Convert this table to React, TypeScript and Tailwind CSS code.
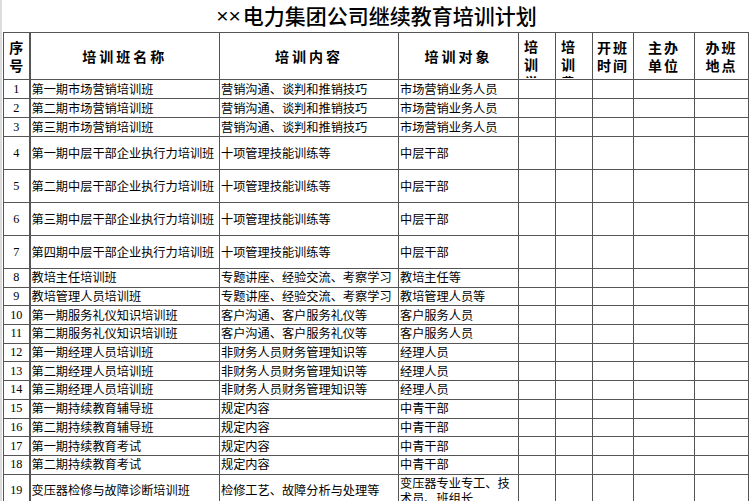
import React from "react";

interface Course {
  no: number;
  name: string;
  content: string;
  target: string;
  h: string;
}

const cjk = { fontFamily: '"Noto Sans CJK SC", "Noto Sans", sans-serif' };
const num = { fontFamily: '"Liberation Serif", "Noto Sans CJK SC", serif' };
const latin = { fontFamily: '"Liberation Sans", "Noto Sans CJK SC", sans-serif' };

const courses: Course[] = [
  { no: 1, name: "第一期市场营销培训班", content: "营销沟通、谈判和推销技巧", target: "市场营销业务人员", h: "h-[19px]" },
  { no: 2, name: "第二期市场营销培训班", content: "营销沟通、谈判和推销技巧", target: "市场营销业务人员", h: "h-[19px]" },
  { no: 3, name: "第三期市场营销培训班", content: "营销沟通、谈判和推销技巧", target: "市场营销业务人员", h: "h-[19px]" },
  { no: 4, name: "第一期中层干部企业执行力培训班", content: "十项管理技能训练等", target: "中层干部", h: "h-[33px]" },
  { no: 5, name: "第二期中层干部企业执行力培训班", content: "十项管理技能训练等", target: "中层干部", h: "h-[33px]" },
  { no: 6, name: "第三期中层干部企业执行力培训班", content: "十项管理技能训练等", target: "中层干部", h: "h-[33px]" },
  { no: 7, name: "第四期中层干部企业执行力培训班", content: "十项管理技能训练等", target: "中层干部", h: "h-[33px]" },
  { no: 8, name: "教培主任培训班", content: "专题讲座、经验交流、考察学习", target: "教培主任等", h: "h-[18.7px]" },
  { no: 9, name: "教培管理人员培训班", content: "专题讲座、经验交流、考察学习", target: "教培管理人员等", h: "h-[18.7px]" },
  { no: 10, name: "第一期服务礼仪知识培训班", content: "客户沟通、客户服务礼仪等", target: "客户服务人员", h: "h-[18.7px]" },
  { no: 11, name: "第二期服务礼仪知识培训班", content: "客户沟通、客户服务礼仪等", target: "客户服务人员", h: "h-[18.7px]" },
  { no: 12, name: "第一期经理人员培训班", content: "非财务人员财务管理知识等", target: "经理人员", h: "h-[18.7px]" },
  { no: 13, name: "第二期经理人员培训班", content: "非财务人员财务管理知识等", target: "经理人员", h: "h-[18.7px]" },
  { no: 14, name: "第三期经理人员培训班", content: "非财务人员财务管理知识等", target: "经理人员", h: "h-[18.7px]" },
  { no: 15, name: "第一期持续教育辅导班", content: "规定内容", target: "中青干部", h: "h-[18.7px]" },
  { no: 16, name: "第二期持续教育辅导班", content: "规定内容", target: "中青干部", h: "h-[18.7px]" },
  { no: 17, name: "第一期持续教育考试", content: "规定内容", target: "中青干部", h: "h-[18.7px]" },
  { no: 18, name: "第二期持续教育考试", content: "规定内容", target: "中青干部", h: "h-[18.7px]" },
  { no: 19, name: "变压器检修与故障诊断培训班", content: "检修工艺、故障分析与处理等", target: "变压器专业专工、技术员、班组长", h: "h-[33px]" },
];

const cell = "border border-[#555] p-0";
const th = "border border-[#555] p-0 font-bold text-[14px] leading-[18px] text-black";

export default function App() {
  return (
    <div className="w-[750px] h-[501px] overflow-hidden bg-white border-l-2 border-[#dcdcdc] pl-px" style={cjk}>
      {/* 标题 */}
      <div className="h-[32px] flex items-center justify-center text-[21px] font-medium text-black">
        <span style={latin} className="mr-[2px]">××</span>电力集团公司继续教育培训计划
      </div>

      <table className="table-fixed border-collapse w-[745px] text-black">
        <colgroup>
          <col className="w-[26px]" />
          <col className="w-[190px]" />
          <col className="w-[179px]" />
          <col className="w-[120px]" />
          <col className="w-[37px]" />
          <col className="w-[37px]" />
          <col className="w-[41px]" />
          <col className="w-[61px]" />
          <col className="w-[54px]" />
        </colgroup>
        <thead>
          <tr className="h-[47px]">
            <th className={`${th} text-center border-r-2`}>序<br />号</th>
            <th className={`${th} text-center tracking-[3px]`}>培训班名称</th>
            <th className={`${th} text-center tracking-[3px]`}>培训内容</th>
            <th className={`${th} text-center tracking-[3px]`}>培训对象</th>
            <th className={`${th} align-top text-left`}>
              <div className="h-[45px] overflow-hidden pl-[5px] pt-[4px] w-[19px] break-all">培训学时</div>
            </th>
            <th className={`${th} align-top text-left`}>
              <div className="h-[45px] overflow-hidden pl-[5px] pt-[4px] w-[19px] break-all">培训费用</div>
            </th>
            <th className={`${th} text-center tracking-[2px]`}>开班<br />时间</th>
            <th className={`${th} text-center tracking-[2px]`}>主办<br />单位</th>
            <th className={`${th} text-center tracking-[2px]`}>办班<br />地点</th>
          </tr>
        </thead>
        <tbody className="text-[12.2px] leading-[15px]">
          {courses.map((c) => (
            <tr key={c.no} className={c.h}>
              <td className={`${cell} text-center border-r-2`} style={num}>{c.no}</td>
              <td className={`${cell} pl-[1px] whitespace-nowrap overflow-hidden`}>{c.name}</td>
              <td className={`${cell} pl-[1px] whitespace-nowrap overflow-hidden`}>{c.content}</td>
              <td className={`${cell} pl-[1px] overflow-hidden`}>{c.target}</td>
              <td className={cell}></td>
              <td className={cell}></td>
              <td className={cell}></td>
              <td className={cell}></td>
              <td className={cell}></td>
            </tr>
          ))}
        </tbody>
      </table>
    </div>
  );
}
